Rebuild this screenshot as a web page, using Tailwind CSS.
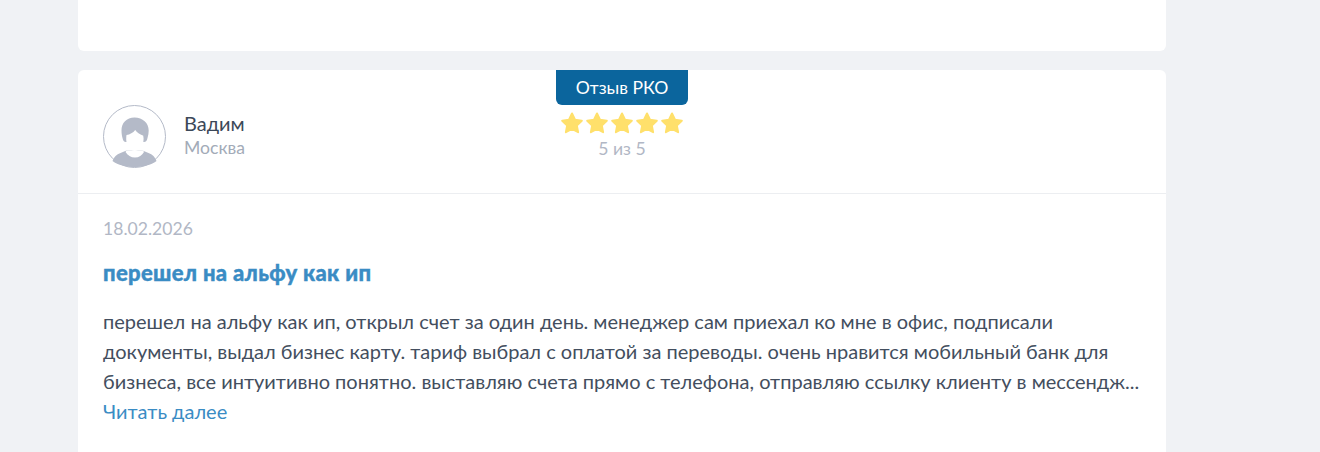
<!DOCTYPE html>
<html lang="ru"><head><meta charset="utf-8">
<script src="https://cdn.jsdelivr.net/npm/@tailwindcss/browser@4"></script>
</head>
<body class="bg-[#f0f2f5] overflow-hidden font-['Lato','Carlito','Noto_Sans',sans-serif]">
<div class="w-[1320px] h-[452px] overflow-hidden pl-[78px]">
  <div class="w-[1088px] h-[51px] bg-white rounded-b-md"></div>
  <div class="relative w-[1088px] h-[400px] mt-[19px] bg-white rounded-md">
    <div class="absolute top-0 left-[478px] w-[132px] h-[35px] bg-[#0b659d] rounded-b-md flex items-center justify-center text-white text-[17.6px] leading-[32px]">Отзыв РКО</div>
    <div class="h-[124px] border-b border-[#eceef1] pl-[25px] flex items-start">
      <div class="flex items-center mt-[35px]">
        <svg width="63" height="63" viewBox="0 0 63 63" class="shrink-0">
          <circle cx="31.500" cy="31.500" r="31" fill="#fff" stroke="#b4bac8" stroke-width="1"/>
          <path d="M9.500 56c1.500-4 4-6.500 8-8l6-2.500h16l6 2.500c4 1.500 6.500 4 8 8-5.500 4.200-13.500 6-22 6s-16.500-1.800-22-6z" fill="#b4bac8"/>
          <path d="M23.500 45.500h16.500l1 1.500c-2 3.500-5 5.500-9 5.500s-7.500-2-9.500-5.500z" fill="#fff"/>
          <path d="M31.500 12.500c-8 0-13 5.500-13 13 0 3 .5 5.500 1 7.500.5 2.500 1.500 4 3.500 4l18 0c2 0 3-1.500 3.500-4 .8-2.500 1.200-5 1.200-7.500 0-7.500-6-13-14.200-13z" fill="#b4bac8"/>
          <path d="M23.500 30c3.500-.5 6.500-2.200 8.700-5 1.800 2.500 4.300 4.300 8 5.500.5 2 .5 4 .2 6-.8 5-4.700 9.500-8.700 9.500s-7.500-4.500-8.300-9.500c-.3-2-.2-4.500.1-6.500z" fill="#fff"/>
          <path d="M34.500 25.500l5.500 2.500.5 3z" fill="#b4bac8"/>
        </svg>
        <div class="ml-[18px] -mt-[5px]">
          <div class="text-[20px] leading-[26px] -translate-y-[1px] text-[#3c4858]">Вадим</div>
          <div class="text-[17.6px] leading-[20px] translate-y-[1px] text-[#a3abb8]">Москва</div>
        </div>
      </div>
    </div>
    <div class="absolute top-[41px] left-[482px] w-[124px] flex justify-between">
      <svg width="24" height="24" viewBox="0 0 24 24" class="w-[24px] h-[24px]"><path d="M12 2.500l3 6.300 6.800.9-5 4.700 1.300 6.800-6.100-3.300-6.100 3.300 1.300-6.800-5-4.700 6.800-.9z" fill="#ffe06b" stroke="#ffe06b" stroke-width="2" stroke-linejoin="round"/></svg>
      <svg width="24" height="24" viewBox="0 0 24 24" class="w-[24px] h-[24px]"><path d="M12 2.500l3 6.300 6.800.9-5 4.700 1.300 6.800-6.100-3.300-6.100 3.300 1.300-6.800-5-4.700 6.800-.9z" fill="#ffe06b" stroke="#ffe06b" stroke-width="2" stroke-linejoin="round"/></svg>
      <svg width="24" height="24" viewBox="0 0 24 24" class="w-[24px] h-[24px]"><path d="M12 2.500l3 6.300 6.800.9-5 4.700 1.300 6.800-6.100-3.300-6.100 3.300 1.300-6.800-5-4.700 6.800-.9z" fill="#ffe06b" stroke="#ffe06b" stroke-width="2" stroke-linejoin="round"/></svg>
      <svg width="24" height="24" viewBox="0 0 24 24" class="w-[24px] h-[24px]"><path d="M12 2.500l3 6.300 6.800.9-5 4.700 1.300 6.800-6.100-3.300-6.100 3.300 1.300-6.800-5-4.700 6.800-.9z" fill="#ffe06b" stroke="#ffe06b" stroke-width="2" stroke-linejoin="round"/></svg>
      <svg width="24" height="24" viewBox="0 0 24 24" class="w-[24px] h-[24px]"><path d="M12 2.500l3 6.300 6.800.9-5 4.700 1.300 6.800-6.100-3.300-6.100 3.300 1.300-6.800-5-4.700 6.800-.9z" fill="#ffe06b" stroke="#ffe06b" stroke-width="2" stroke-linejoin="round"/></svg>
    </div>
    <div class="absolute top-[68px] left-[478px] w-[132px] text-center text-[17.6px] leading-[22px] text-[#b1b7c5]">5 из 5</div>
    <div class="pl-[25px] pr-[20px]">
      <div class="mt-[23px] text-[17.6px] leading-[24px] text-[#b1b7c5]">18.02.2026</div>
      <div class="mt-[19px] text-[22px] leading-[26px] font-black tracking-[0.32px] [-webkit-text-stroke:0.4px_#3a8cc4] text-[#3a8cc4]">перешел на альфу как ип</div>
      <p class="mt-[20px] text-[20px] leading-[30px] text-[#434e5e]">перешел на альфу как ип, открыл счет за один день. менеджер сам приехал ко мне в офис, подписали<br>документы, выдал бизнес карту. тариф выбрал с оплатой за переводы. очень нравится мобильный банк для<br>бизнеса, все интуитивно понятно. выставляю счета прямо с телефона, отправляю ссылку клиенту в мессендж...</p>
      <div class="text-[20px] leading-[30px] text-[#3a8cc4]">Читать далее</div>
    </div>
  </div>
</div>
</body></html>
